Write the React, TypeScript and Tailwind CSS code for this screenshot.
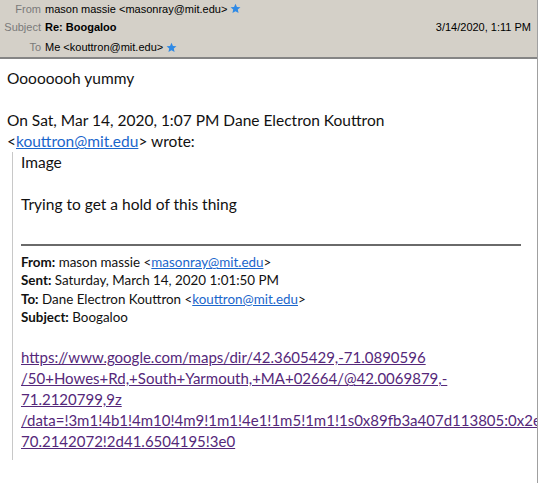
const Star = () => (
  <svg className="ml-[3px] inline-block h-[11px] w-[11px]" viewBox="0 0 24 24">
    <path
      d="M12 1.5l3.2 7.1 7.6.7-5.8 5.1 1.7 7.6L12 18l-6.7 4 1.7-7.6-5.8-5.1 7.6-.7z"
      fill="#2f8ae6"
    />
  </svg>
);

const App = () => {
  const body = { fontFamily: 'Lato, "Open Sans", sans-serif' };
  const head = { fontFamily: '"Liberation Sans", Arial, sans-serif' };

  return (
    <div className="flex h-[483px] w-[541px] bg-white">
      <div className="flex w-[538px] flex-col overflow-hidden border-r border-[#a0a0a0]">
        <div
          className="flex h-[59px] flex-col border-b-2 border-[#858585] bg-[#d4d0c8] text-[11px] text-black"
          style={head}
        >
          <div className="flex h-[18px] items-center">
            <span className="w-[45px] pr-[4px] text-right text-[#7a7a7a]">From</span>
            <span>mason massie &lt;masonray@mit.edu&gt;</span>
            <Star />
          </div>
          <div className="flex h-[20px] items-center">
            <span className="w-[45px] pr-[4px] text-right text-[#7a7a7a]">Subject</span>
            <span className="font-bold">Re: Boogaloo</span>
            <span className="ml-auto pr-[6px]">3/14/2020, 1:11 PM</span>
          </div>
          <div className="flex h-[20px] items-center">
            <span className="w-[45px] pr-[4px] text-right text-[#7a7a7a]">To</span>
            <span>Me &lt;kouttron@mit.edu&gt;</span>
            <Star />
          </div>
        </div>

        <div className="pl-[7px] pt-[9px] text-[15.5px] leading-[21px] text-[#111]" style={body}>
          <p>Oooooooh yummy</p>
          <p className="mt-[21px]">On Sat, Mar 14, 2020, 1:07 PM Dane Electron Kouttron</p>
          <p>
            &lt;<a className="text-[#1a66cc] underline">kouttron@mit.edu</a>&gt; wrote:
          </p>
          <div className="ml-[5px] border-l border-[#c8c8c8] pl-[8px] pb-[8px]">
            <p>Image</p>
            <p className="mt-[21px]">Trying to get a hold of this thing</p>
            <div className="mr-[16px] mt-[29px] h-[2px] bg-[#6a6a6a]" />
            <div className="mt-[7px] text-[13.4px] leading-[18.3px]">
              <p>
                <b>From:</b> mason massie &lt;<a className="text-[#1a66cc] underline">masonray@mit.edu</a>&gt;
              </p>
              <p>
                <b>Sent:</b> Saturday, March 14, 2020 1:01:50 PM
              </p>
              <p>
                <b>To:</b> Dane Electron Kouttron &lt;<a className="text-[#1a66cc] underline">kouttron@mit.edu</a>&gt;
              </p>
              <p>
                <b>Subject:</b> Boogaloo
              </p>
            </div>
            <div className="mt-[21px] whitespace-nowrap text-[15px] text-[#55287a] underline">
              <p>https://www.google.com/maps/dir/42.3605429,-71.0890596</p>
              <p>/50+Howes+Rd,+South+Yarmouth,+MA+02664/@42.0069879,-</p>
              <p>71.2120799,9z</p>
              <p>/data=!3m1!4b1!4m10!4m9!1m1!4e1!1m5!1m1!1s0x89fb3a407d113805:0x2e6d8e4e1ed6f1b!2m2!1d-</p>
              <p>70.2142072!2d41.6504195!3e0</p>
            </div>
          </div>
        </div>
      </div>
    </div>
  );
};

export default App;
